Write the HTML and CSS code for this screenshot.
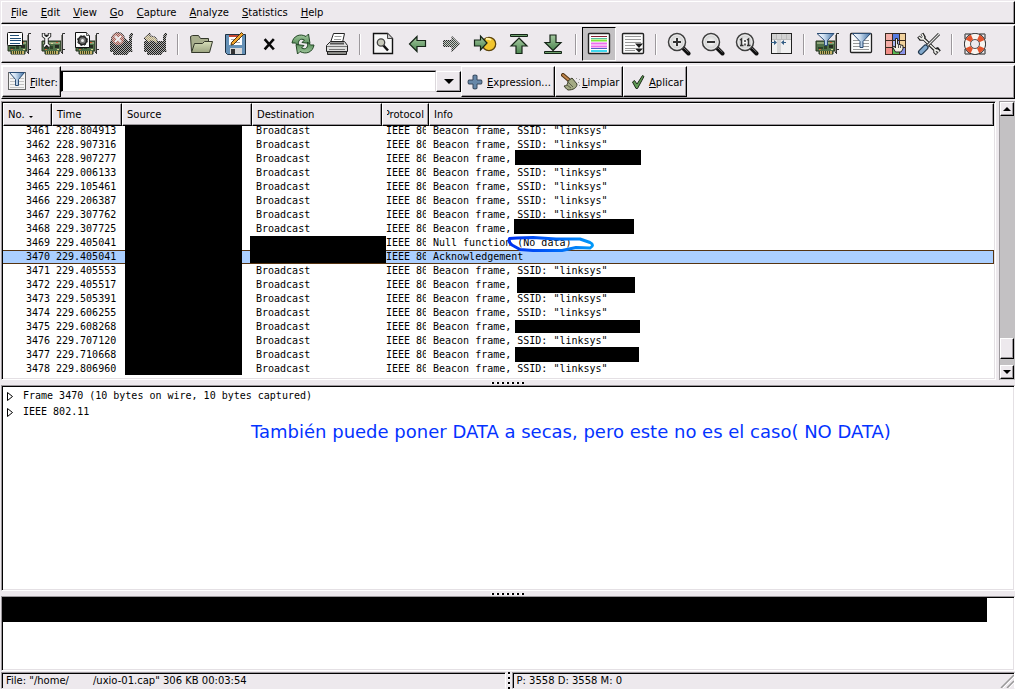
FILE: index.html
```html
<!DOCTYPE html>
<html lang="es">
<head>
<meta charset="utf-8">
<title>uxio-01.cap</title>
<link rel="stylesheet" href="styles.css">
</head>
<body>
<svg class="defs" width="0" height="0" aria-hidden="true">
  <defs>
    <linearGradient id="gFunnel" x1="0" x2="1"><stop offset="0" stop-color="#fff"/><stop offset=".4" stop-color="#cfe0f2"/><stop offset="1" stop-color="#3d6fa4"/></linearGradient>
    <linearGradient id="gGreen" x1="0" y1="0" x2="0" y2="1"><stop offset="0" stop-color="#a5c9a0"/><stop offset="1" stop-color="#4c8650"/></linearGradient>
    <linearGradient id="gFolder" x1="0" y1="0" x2="0" y2="1"><stop offset="0" stop-color="#d6ddb8"/><stop offset="1" stop-color="#9da582"/></linearGradient>
    <radialGradient id="gLens"><stop offset="0" stop-color="#fff"/><stop offset="1" stop-color="#c4c4c4"/></radialGradient>
    <linearGradient id="gInk" x1="0" x2="1"><stop offset="0" stop-color="#0030f0"/><stop offset=".5" stop-color="#0060f8"/><stop offset="1" stop-color="#0098f8"/></linearGradient>
    <pattern id="pDither" width="2" height="2" patternUnits="userSpaceOnUse"><path d="M0 0h1v1H0zM1 1h1v1H1z" fill="#ede9ed"/></pattern>
    <symbol id="card" viewBox="0 0 24 24">
      <path d="M1 9h19v10h-2v3H4v-3H1z" fill="#4f7148" stroke="#26331f"/>
      <path d="M2 10h17v2H2z" fill="#8ea47a"/>
      <path d="M14 13h4v3h-4z" fill="#262c22"/><path d="M3 15h5v2H3zM9 14h3v3H9z" fill="#2d4228"/>
      <path d="M5 19h12v3H5z" fill="#c5b267"/><path d="M6.500 19v3M8.500 19v3M10.500 19v3M12.500 19v3M14.500 19v3" stroke="#37441e"/>
      <path d="M15 10h2v1h-2zM4 17h2v1H4z" fill="#d5603d"/><path d="M10 11h2v1h-2zM16 17h2v1h-2z" fill="#ddd39c"/>
      <path d="M24 1.500h-2.500V22M20 4.500h2M21 17.500h3M20 20.500h2" fill="none" stroke="#303030"/><path d="M20.500 3v17" stroke="#85857c"/>
    </symbol>
    <symbol id="lens" viewBox="0 0 24 24">
      <path d="M15.500 15.500l6 6" stroke="#101010" stroke-width="4" stroke-linecap="round"/><path d="M16.500 15.500l5 4.700" stroke="#777"/>
      <circle cx="10" cy="10" r="8.500" fill="url(#gLens)" stroke="#3e3e3e" stroke-width="1.500"/>
      <circle cx="10" cy="10" r="7" fill="none" stroke="#eee"/>
    </symbol>
  </defs>
</svg>

<nav class="bar menubar" aria-label="Menu">
  <button class="menu"><u>F</u>ile</button>
  <button class="menu"><u>E</u>dit</button>
  <button class="menu"><u>V</u>iew</button>
  <button class="menu"><u>G</u>o</button>
  <button class="menu"><u>C</u>apture</button>
  <button class="menu"><u>A</u>nalyze</button>
  <button class="menu"><u>S</u>tatistics</button>
  <button class="menu"><u>H</u>elp</button>
</nav>

<div class="bar toolbar" role="toolbar" aria-label="Main">
  <button class="tool" aria-label="Interfaces"><svg class="icon" viewBox="0 0 24 24"><use href="#card"/><rect x=".5" y=".5" width="15" height="13" rx="1" fill="#fff" stroke="#111"/><path d="M3 3.500h9M3 6.500h11M3 8.500h11M3 11.500h10" stroke="#235078"/></svg></button>
  <button class="tool" aria-label="Options"><svg class="icon" viewBox="0 0 24 24"><use href="#card"/><path d="M2.500 1v3L5 6v6l-2 3M8.500 1v3L6 6v6l2.500 3M3.500 4.500h4" fill="none" stroke="#222" stroke-width="3.400"/><path d="M2.500 1.500V4L5 6v6l-2 2.500M8.500 1.500V4L6 6v6l2.500 2.500" fill="none" stroke="#f6f6f6" stroke-width="1.600"/></svg></button>
  <button class="tool" aria-label="Start"><svg class="icon" viewBox="0 0 24 24"><use href="#card"/><path d="M.5.5h11l3 3v12H.5z" fill="#fafafa" stroke="#111"/><path d="M11.500.5v3h3" fill="#ddd" stroke="#555"/><circle cx="7.500" cy="8.500" r="4" fill="#777" stroke="#222" stroke-width="1.600"/><circle cx="7.500" cy="8.500" r="5" fill="none" stroke="#222" stroke-dasharray="2 2"/><circle cx="7.500" cy="8.500" r="1.500" fill="#eee"/></svg></button>
  <button class="tool" aria-label="Stop" disabled><svg class="icon" viewBox="0 0 24 24"><path d="M1 10l3-6h10l5 5h1V4l2-3h2v2l-1 2v13l1 2h-4l-2 3H4v-3H1z" fill="#1c1e1a"/><circle cx="9" cy="7" r="6.500" fill="#a5584b" stroke="#333"/><path d="M6 4l6 6M12 4l-6 6" stroke="#eee" stroke-width="2"/><rect width="24" height="24" fill="url(#pDither)" opacity=".7"/></svg></button>
  <button class="tool" aria-label="Restart" disabled><svg class="icon" viewBox="0 0 24 24"><path d="M1 9h19V4l2-3h2v2l-1 2v13l1 2h-4l-2 3H4v-3H1z" fill="#1c1e1a"/><path d="M1 6l6-5v3c6 0 8 3 7 9-1-3-3-4-7-4v3z" fill="#b8aa78" stroke="#222"/><rect width="24" height="24" fill="url(#pDither)" opacity=".7"/></svg></button>
  <span class="sep"></span>
  <button class="tool" aria-label="Open"><svg class="icon" viewBox="0 0 24 24"><path d="M2.500 19.500L1.500 4.500l2-1h6l2 3h8v4" fill="#a9af8e" stroke="#33372a"/><path d="M2.500 20.500l3-9h8l2-2h8l-3 11z" fill="url(#gFolder)" stroke="#33372a"/></svg></button>
  <button class="tool" aria-label="Save"><svg class="icon" viewBox="0 0 24 24"><path d="M2.500 2.500h20v20h-18l-2-2z" fill="#6591b7" stroke="#1e3142"/><path d="M6 3h13v10H6z" fill="#fff"/><path d="M6 3h13v2H6z" fill="#c54832"/><path d="M8 7.500h9M8 10.500h9" stroke="#aaa"/><path d="M7 16h12v6H7z" fill="#d8d8d8"/><path d="M8 17h4v5H8z" fill="#333"/><path d="M18.500.5l2 2-10 10-2.500.500.500-2.500z" fill="#f0a32a" stroke="#4d3411"/></svg></button>
  <button class="tool" aria-label="Close"><svg class="icon" viewBox="0 0 24 24"><path d="M8.500 8l7.500 8.500M16 8L8.500 16.500" stroke="#080808" stroke-width="2.600" stroke-linecap="square"/></svg></button>
  <button class="tool" aria-label="Reload"><svg class="icon" viewBox="0 0 24 24"><path id="half" d="M1 11C2 4 9 1 15 4.500L17.500 2l1.500 9.500-8-1 2.500-2.500C9.500 6 6.500 8 7.500 14L4.500 11z" fill="url(#gGreen)" stroke="#234726"/><use href="#half" transform="rotate(180 12 12)"/></svg></button>
  <button class="tool" aria-label="Print"><svg class="icon" viewBox="0 0 24 24"><path d="M5.500 10.500l3-9h11l-2 9z" fill="#fff" stroke="#222"/><path d="M9.500 4.500h7M9 7.500h7" stroke="#999"/><path d="M1.500 13.500l4-4h14l3 4v6h-21z" fill="#dedede" stroke="#222"/><path d="M5 11.500h14" stroke="#555" stroke-width="2"/><path d="M2 14.500h20M4 17.500h16" stroke="#777"/><path d="M2.500 19.500h19v3h-19z" fill="#8b8b87" stroke="#222"/></svg></button>
  <span class="sep"></span>
  <button class="tool" aria-label="Find"><svg class="icon" viewBox="0 0 24 24"><path d="M2.500 1.500h14l5 5v15h-19z" fill="#f7f7f7" stroke="#111" stroke-width="1.400"/><path d="M16.500 1.500v5h5" fill="#ccc" stroke="#444"/><path d="M12 13l5 5.500" stroke="#111" stroke-width="2.600"/><circle cx="10" cy="10.500" r="3.700" fill="#c8cabb" stroke="#444" stroke-width="1.300"/></svg></button>
  <button class="tool" aria-label="Back"><svg class="icon" viewBox="0 0 24 24"><path d="M4.500 12L12 4.500v4h8.500v6H12v5z" fill="url(#gGreen)" stroke="#152417" stroke-width="1.200"/></svg></button>
  <button class="tool" aria-label="Forward" disabled><svg class="icon" viewBox="0 0 24 24"><path d="M20.500 12L13 4.500v4H4.500v6H13v5z" fill="#3d4a3c" stroke="#222"/><rect width="24" height="24" fill="url(#pDither)" opacity=".8"/></svg></button>
  <button class="tool" aria-label="Go to packet"><svg class="icon" viewBox="0 0 24 24"><circle cx="16" cy="12" r="6.700" fill="#f2c52d" stroke="#5c430b" stroke-width="1.300"/><path d="M13 7a5 5 0 0 1 5 1" stroke="#fff3a8" stroke-width="2" fill="none"/><path d="M14 11L7.500 4v4h-6v6h6v4z" fill="url(#gGreen)" stroke="#152417" stroke-width="1.200"/></svg></button>
  <button class="tool" aria-label="First packet"><svg class="icon" viewBox="0 0 24 24"><path d="M3.500 2.500h17v2h-17z" fill="#6ea06d" stroke="#152417"/><path d="M12 6l8 8h-5v7.500H9V14H4z" fill="url(#gGreen)" stroke="#152417" stroke-width="1.200"/></svg></button>
  <button class="tool" aria-label="Last packet"><svg class="icon" viewBox="0 0 24 24"><path d="M3.500 19.500h17v2h-17z" fill="#6ea06d" stroke="#152417"/><path d="M12 18.500l8-8h-5V3H9v7.500H4z" fill="url(#gGreen)" stroke="#152417" stroke-width="1.200"/></svg></button>
  <span class="sep"></span>
  <button class="tool pressed" aria-label="Colorize" aria-pressed="true"><svg class="icon" viewBox="0 0 24 24"><rect x="1.500" y="1.500" width="21" height="20" rx="1" fill="#fff" stroke="#222" stroke-width="1.400"/><path d="M4 4.500h16" stroke="#852034"/><path d="M4 6.500h16" stroke="#55bb99"/><path d="M4 8.500h16" stroke="#7ee43c" stroke-width="2"/><path d="M4 11.500h16M4 14.500h16" stroke="#ee6cee" stroke-width="2"/><path d="M4 16.500h16" stroke="#555fc5"/><path d="M4 19h16" stroke="#3fd8ee" stroke-width="2"/></svg></button>
  <button class="tool" aria-label="Auto scroll"><svg class="icon" viewBox="0 0 24 24"><rect x="1.500" y="1.500" width="21" height="20" rx="1" fill="#fcfcfc" stroke="#222" stroke-width="1.400"/><path d="M4 4.500h16M4 7.500h16M4 10.500h16M4 13.500h10M4 16.500h10M4 18.500h10" stroke="#999"/><path d="M14 11.500h8l-4 4.500zM14 16.500h8l-4 4z" fill="#1c1c1c"/></svg></button>
  <span class="sep"></span>
  <button class="tool" aria-label="Zoom in"><svg class="icon" viewBox="0 0 24 24"><use href="#lens"/><path d="M6 10h8M10 6v8" stroke="#333" stroke-width="2"/></svg></button>
  <button class="tool" aria-label="Zoom out"><svg class="icon" viewBox="0 0 24 24"><use href="#lens"/><path d="M6 10h8" stroke="#333" stroke-width="2"/></svg></button>
  <button class="tool" aria-label="Normal size"><svg class="icon" viewBox="0 0 24 24"><use href="#lens"/><path d="M5 8l1.500-1v7M5 13.500h3.500M12 8l1.500-1v7M12 13.500h3.500M10 8v2M10 11.500v2" stroke="#333" stroke-width="1.500" fill="none"/></svg></button>
  <button class="tool" aria-label="Resize columns"><svg class="icon" viewBox="0 0 24 24"><rect x="2.500" y="1.500" width="20" height="20" fill="#f1f1f1" stroke="#222"/><path d="M3 2h19v5H3z" fill="#d1d1d1"/><path d="M8 2h4v19H8z" fill="#d6d6d6"/><path d="M7.500 2v5M12.500 2v5M17.500 2v5M3 7.500h19" stroke="#bbb"/><path d="M2 10.500h4M13 10.500h4" stroke="#345f85"/><path d="M5 8l3 2.500L5 13zM15 8l-3 2.500 3 2.500z" fill="#345f85"/></svg></button>
  <span class="sep"></span>
  <button class="tool" aria-label="Capture filters"><svg class="icon" viewBox="0 0 24 24"><use href="#card"/><path d="M2 1.500h17l-6.500 7v5h-3v-5z" fill="url(#gFunnel)" stroke="#2c4d74"/></svg></button>
  <button class="tool" aria-label="Display filters"><svg class="icon" viewBox="0 0 24 24"><rect x="1.500" y="1.500" width="21" height="19" rx="1" fill="#fcfcfc" stroke="#222" stroke-width="1.300"/><path d="M4 8.500h16M4 11.500h16M4 14.500h16M4 17.500h16" stroke="#999"/><path d="M3.500 1.500h18l-7.500 8v6h-3v-6z" fill="url(#gFunnel)" stroke="#2c4d74"/></svg></button>
  <button class="tool" aria-label="Coloring rules"><svg class="icon" viewBox="0 0 24 24"><rect x="2" y="1" width="21" height="22" fill="#3b2b20"/><path d="M3 2h6v6H3zM3 9h6v6H3z" fill="#f3ada6"/><path d="M3 16h6v6H3z" fill="#f08d86"/><path d="M10 2h6v6h-6z" fill="#567be0"/><path d="M17 2h5v6h-5zM17 9h5v6h-5z" fill="#f1d29d"/><path d="M10 9h6v6h-6z" fill="#a9b9f1"/><path d="M10 16h6v6h-6z" fill="#58bb55"/><path d="M17 16h5v6h-5z" fill="#8a94e9"/><path d="M12.500 20l-3-5 1.500-1 1.500 2V6.500h2V12l5.500 1.500V17l-2 3z" fill="#f1eee2" stroke="#252525"/><path d="M15.500 13v3M17.500 13.500V16" stroke="#555"/></svg></button>
  <button class="tool" aria-label="Preferences"><svg class="icon" viewBox="0 0 24 24"><path d="M5 5l14 14M1.500 4.500L3.500 7H6l1-2-2-3.500M22.500 19.500L20.500 17l-2.500 1v2l2 2" fill="none" stroke="#222" stroke-width="3.400"/><path d="M5 5.500l14 13M2 5l2 2h2l.500-2L5 2M22 19.500L20 18l-2 .500V20l1.500 1.500" fill="none" stroke="#f1f1ed" stroke-width="1.600"/><path d="M22 2L10 14" stroke="#222" stroke-width="3"/><path d="M22 2L10 14" stroke="#ddd" stroke-width="1.300"/><path d="M8.500 15.500L4 20" stroke="#22384e" stroke-width="6" stroke-linecap="round"/><path d="M8.500 15.500L4 20" stroke="#82a9cd" stroke-width="3.600" stroke-linecap="round"/></svg></button>
  <span class="sep"></span>
  <button class="tool" aria-label="Help"><svg class="icon" viewBox="0 0 24 24"><path d="M2 2h5l4 3M22 2h-5l-4 3M2 22h5l4-3M22 22h-5l-4-3M2 2v5M22 2v5M2 22v-5M22 22v-5" fill="none" stroke="#666" stroke-width="1.500"/><circle cx="12" cy="12" r="7.500" fill="none" stroke="#222" stroke-width="7"/><circle cx="12" cy="12" r="7.500" fill="none" stroke="#f8f4ef" stroke-width="5.400"/><circle cx="12" cy="12" r="7.500" fill="none" stroke="#e3532b" stroke-width="5.400" stroke-dasharray="5.300 6.480" stroke-dashoffset="-3.200"/></svg></button>
</div>

<form class="bar filterbar">
  <button type="button" class="raised filter-btn"><svg class="small-icon" viewBox="0 0 20 20"><rect x="1.500" y="1.500" width="17" height="17" fill="#f4f4f4" stroke="#666"/><path d="M3 7.500h14M3 10.500h14M3 13.500h14M3 16.500h14" stroke="#c2c2c2"/><path d="M2.500 1.500h15l-6 7v6h-3v-6z" fill="url(#gFunnel)" stroke="#2c4d74"/></svg><span><u>F</u>ilter:</span></button>
  <div class="combo">
    <input class="entry" type="text" aria-label="Filter">
    <button type="button" class="drop" aria-label="History"><svg class="arrow-wide" viewBox="0 0 10 5"><path d="M0 0h10L5 5z"/></svg></button>
  </div>
  <button type="button" class="raised expr-btn"><svg class="btn-icon" viewBox="0 0 16 16"><path d="M6 1.500q2-1 4 0V6h4.500q1 2 0 4H10v4.500q-2 1-4 0V10H1.500q-1-2 0-4H6z" fill="#6687a8" stroke="#34475c"/></svg><span><u>E</u>xpression...</span></button>
  <button type="button" class="raised clear-btn"><svg class="clear-icon" viewBox="0 0 20 18"><path d="M2 2l7 6" stroke="#503414" stroke-width="4" stroke-linecap="round"/><path d="M2 2l7 6" stroke="#c0854c" stroke-width="2" stroke-linecap="round"/><path d="M7 8l4-3 5 6c0 4-4 6-9 6-2-1-3-3-4-4 3 0 4-2 4-5z" fill="#a4aa84" stroke="#3a3e2a"/><path d="M7 9l5 5M6 12l4 3" stroke="#5b6048"/><path d="M15 5h1v1h-1zM18 6h1v1h-1zM17 9h1v1h-1zM18 12h1v1h-1z" fill="#999"/></svg><span><u>L</u>impiar</span></button>
  <button type="button" class="raised apply-btn"><svg class="btn-icon" viewBox="0 0 16 16"><path d="M2.500 8l2-1.500L7 10l5.500-8.500 1.500 1L7.500 14.500H6z" fill="#5f9a55" stroke="#1c2b19"/></svg><span><u>A</u>plicar</span></button>
</form>

<main class="panes">
  <section class="list-row">
    <div class="sunken list">
      <table class="packets">
        <colgroup><col class="c-no"><col class="c-time"><col class="c-addr"><col class="c-addr"><col class="c-proto"><col></colgroup>
        <thead>
          <tr><th>No. <svg class="sort" viewBox="0 0 4 2"><path d="M0 0h4L2 2z"/></svg></th><th>Time</th><th>Source</th><th>Destination</th><th><div class="cut">Protocol</div></th><th>Info</th></tr>
        </thead>
        <tbody>
          <tr class="partial"><td>3461</td><td>228.804913</td><td></td><td>Broadcast</td><td><div class="clip">IEEE 802.11</div></td><td>Beacon frame, SSID: "linksys"</td></tr>
          <tr><td>3462</td><td>228.907316</td><td></td><td>Broadcast</td><td><div class="clip">IEEE 802.11</div></td><td>Beacon frame, SSID: "linksys"</td></tr>
          <tr><td>3463</td><td>228.907277</td><td></td><td>Broadcast</td><td><div class="clip">IEEE 802.11</div></td><td>Beacon frame,</td></tr>
          <tr><td>3464</td><td>229.006133</td><td></td><td>Broadcast</td><td><div class="clip">IEEE 802.11</div></td><td>Beacon frame, SSID: "linksys"</td></tr>
          <tr><td>3465</td><td>229.105461</td><td></td><td>Broadcast</td><td><div class="clip">IEEE 802.11</div></td><td>Beacon frame, SSID: "linksys"</td></tr>
          <tr><td>3466</td><td>229.206387</td><td></td><td>Broadcast</td><td><div class="clip">IEEE 802.11</div></td><td>Beacon frame, SSID: "linksys"</td></tr>
          <tr><td>3467</td><td>229.307762</td><td></td><td>Broadcast</td><td><div class="clip">IEEE 802.11</div></td><td>Beacon frame, SSID: "linksys"</td></tr>
          <tr><td>3468</td><td>229.307725</td><td></td><td>Broadcast</td><td><div class="clip">IEEE 802.11</div></td><td>Beacon frame,</td></tr>
          <tr><td>3469</td><td>229.405041</td><td></td><td></td><td><div class="clip">IEEE 802.11</div></td><td>Null function (No data)</td></tr>
          <tr class="selected"><td>3470</td><td>229.405041</td><td></td><td></td><td><div class="clip">IEEE 802.11</div></td><td>Acknowledgement</td></tr>
          <tr><td>3471</td><td>229.405553</td><td></td><td>Broadcast</td><td><div class="clip">IEEE 802.11</div></td><td>Beacon frame, SSID: "linksys"</td></tr>
          <tr><td>3472</td><td>229.405517</td><td></td><td>Broadcast</td><td><div class="clip">IEEE 802.11</div></td><td>Beacon frame,</td></tr>
          <tr><td>3473</td><td>229.505391</td><td></td><td>Broadcast</td><td><div class="clip">IEEE 802.11</div></td><td>Beacon frame, SSID: "linksys"</td></tr>
          <tr><td>3474</td><td>229.606255</td><td></td><td>Broadcast</td><td><div class="clip">IEEE 802.11</div></td><td>Beacon frame, SSID: "linksys"</td></tr>
          <tr><td>3475</td><td>229.608268</td><td></td><td>Broadcast</td><td><div class="clip">IEEE 802.11</div></td><td>Beacon frame,</td></tr>
          <tr><td>3476</td><td>229.707120</td><td></td><td>Broadcast</td><td><div class="clip">IEEE 802.11</div></td><td>Beacon frame, SSID: "linksys"</td></tr>
          <tr><td>3477</td><td>229.710668</td><td></td><td>Broadcast</td><td><div class="clip">IEEE 802.11</div></td><td>Beacon frame,</td></tr>
          <tr><td>3478</td><td>229.806960</td><td></td><td>Broadcast</td><td><div class="clip">IEEE 802.11</div></td><td>Beacon frame, SSID: "linksys"</td></tr>
        </tbody>
      </table>
      <svg class="marks" width="700" height="275" viewBox="3 103 700 275" aria-hidden="true">
        <path d="M125 126h117v249H125zM250 236h136v27H250zM515 150h126v15H515zM514 219h120v15H514zM517 277h118v16H517zM515 320h125v13H515zM515 347h124v15H515z"/>
        <path d="M517 238L509.500 238.500Q508 242 512 245L520 249.500L533 250.500H562L576 247.500L590 248Q595 245 590 242.500L580 239L556 239L533 237.500L517 238" fill="none" stroke="url(#gInk)" stroke-width="3" stroke-linejoin="round" stroke-linecap="round"/>
      </svg>
    </div>
    <div class="scroll">
      <button class="step" aria-label="Up"><svg class="arrow" viewBox="0 0 8 4"><path d="M0 4h8L4 0z"/></svg></button>
      <div class="trough"><div class="thumb"></div></div>
      <button class="step" aria-label="Down"><svg class="arrow" viewBox="0 0 8 4"><path d="M0 0h8L4 4z"/></svg></button>
    </div>
  </section>
  <div class="splitter"><span class="grip"></span></div>
  <section class="sunken tree">
    <div class="node"><svg class="twist" viewBox="0 0 6 9"><path d="M.5.5v8l5-4z"/></svg>Frame 3470 (10 bytes on wire, 10 bytes captured)</div>
    <div class="node"><svg class="twist" viewBox="0 0 6 9"><path d="M.5.5v8l5-4z"/></svg>IEEE 802.11</div>
    <p class="note">También puede poner DATA a secas, pero este no es el caso( NO DATA)</p>
  </section>
  <div class="splitter"><span class="grip"></span></div>
  <section class="sunken hex"><div class="block"></div></section>
</main>

<footer class="status">
  <div class="cell file"><span>File: "/home/</span><span>/uxio-01.cap" 306 KB 00:03:54</span></div>
  <span class="vgrip"></span>
  <div class="cell counts">P: 3558 D: 3558 M: 0<svg class="resize" viewBox="0 0 14 14"><path d="M1 14L14 1M7 14l7-7" stroke="#999" stroke-width="1.500"/><path d="M3 14L14 3M9 14l5-5" stroke="#fff"/></svg></div>
</footer>
</body>
</html>
```

FILE: styles.css
```css
* { box-sizing: border-box; }

:root {
  --face: #ede9ed;
  --shade: #9c989c;
  --trough: #c3c1c3;
}

body {
  margin: 0;
  padding: 1px 0 0 1px;
  height: 100vh;
  display: flex;
  flex-direction: column;
  overflow: hidden;
  background: var(--face);
  color: #000;
  font: 10px/14px "DejaVu Sans", sans-serif;
}

button {
  margin: 0;
  padding: 0;
  border: 0;
  background: none;
  color: inherit;
  font: inherit;
}

u { text-underline-offset: 1px; }
.defs { position: absolute; }

.bar {
  display: flex;
  flex: none;
  border: 1px solid;
  border-color: #fff #000 #000 #fff;
  box-shadow: inset -1px -1px var(--shade);
}

.menubar { height: 23px; padding-left: 3px; margin-bottom: 1px; }
.menu { padding: 0 7px 0 6px; }

.toolbar { height: 38px; margin-bottom: 2px; align-items: center; }
.tool {
  width: 34px;
  height: 34px;
  display: flex;
  flex: none;
  align-items: center;
  justify-content: center;
}
.icon { width: 24px; height: 24px; }
.pressed {
  background: var(--trough);
  border: 1px solid;
  border-color: #000 #fff #fff #000;
}
.sep {
  flex: none;
  width: 2px;
  height: 21px;
  margin: 0 5px;
  background: linear-gradient(90deg, var(--shade) 50%, #fff 50%);
}

.filterbar { height: 34px; margin-bottom: 2px; padding: 0 0 1px; align-items: stretch; }
.raised {
  display: flex;
  flex: none;
  align-items: center;
  border: 1px solid;
  border-color: #fff #000 #000 #fff;
  box-shadow: inset -1px -1px var(--shade);
  white-space: nowrap;
}
.raised span { padding-top: 3px; }
.filter-btn { width: 59px; padding-left: 4px; gap: 3px; }
.small-icon { width: 20px; height: 20px; margin-bottom: 2px; }
.expr-btn { width: 94px; padding-left: 5px; gap: 4px; }
.clear-btn { width: 68px; padding-left: 5px; gap: 1px; }
.apply-btn { width: 64px; padding-left: 6px; gap: 3px; }
.btn-icon { width: 16px; height: 16px; flex: none; }
.clear-icon { width: 20px; height: 18px; flex: none; }
.combo { display: flex; flex: 0 1 400px; margin: 5px 0; }
.entry {
  flex: 1;
  min-width: 0;
  border: 1px solid;
  border-color: #000 #dcd8dc #dcd8dc #000;
  background: #fff;
  box-shadow: 0 -1px var(--shade), inset 1px 0 #000;
  padding: 0 4px;
  font: inherit;
  outline: 0;
}
.drop {
  width: 25px;
  display: flex;
  align-items: center;
  justify-content: center;
  border: 1px solid;
  border-color: #fff #000 #000 #fff;
  box-shadow: inset -1px -1px var(--shade);
}
.arrow-wide { width: 10px; height: 5px; }

.panes { flex: 1; display: flex; flex-direction: column; min-height: 0; }
.list-row { flex: 279 1 279px; display: flex; gap: 3px; min-height: 0; }
.sunken {
  position: relative;
  overflow: hidden;
  border: 1px solid;
  border-color: var(--shade) #fff #fff var(--shade);
  background: #fff;
  box-shadow: inset 1px 1px #000, inset -1px -1px #e4e0e4;
}
.list { flex: 1; min-width: 0; padding: 1px 1px 0 1px; }

.packets {
  width: 100%;
  table-layout: fixed;
  border-collapse: separate;
  border-spacing: 0;
}
.c-no { width: 49px; }
.c-time { width: 70px; }
.c-addr { width: 130px; }
.c-proto { width: 47px; }
.packets th {
  height: 23px;
  padding: 0 4px;
  background: var(--face);
  border: 1px solid;
  border-color: #fff #000 #000 #fff;
  box-shadow: inset -1px -1px var(--shade);
  font-weight: normal;
  text-align: left;
  white-space: nowrap;
}
.cut { display: flex; justify-content: flex-end; overflow: hidden; width: 37px; }
.clip { overflow: hidden; width: 40px; }
.sort { width: 4px; height: 2px; margin-left: 1px; }
.packets td {
  height: 14px;
  padding: 0 2px 0 4px;
  overflow: hidden;
  font: 10px/12px "DejaVu Sans Mono", monospace;
  white-space: nowrap;
}
.packets td:first-child { text-align: right; }
.partial td { height: 12px; padding-bottom: 2px; line-height: 10px; }
.selected td { background: #abcfff; border: 1px solid #553311; border-width: 1px 0; }
.selected td:last-child { border-right-width: 1px; }
.marks { position: absolute; left: 1px; top: 1px; }

.scroll {
  width: 16px;
  display: flex;
  flex-direction: column;
  border-left: 1px solid var(--shade);
  border-top: 1px solid var(--shade);
  padding: 0 1px 1px 0;
  background: var(--trough);
}
.step, .thumb {
  flex: none;
  display: flex;
  align-items: center;
  justify-content: center;
  background: var(--face);
  border: 1px solid;
  border-color: #fff #000 #000 #fff;
  box-shadow: inset -1px -1px var(--shade);
}
.step { height: 14px; }
.arrow { width: 8px; height: 4px; }
.trough { flex: 1; display: flex; align-items: flex-end; padding-bottom: 6px; }
.thumb { width: 100%; height: 21px; }

.splitter { flex: none; height: 5px; display: flex; justify-content: center; align-items: center; }
.grip {
  width: 35px;
  height: 2px;
  background: repeating-linear-gradient(90deg, #fff 0 1px, #000 1px 3px, transparent 3px 5px);
}

.tree { flex: 206 1 206px; padding: 2px 0 0 5px; }
.node {
  display: flex;
  align-items: center;
  gap: 10px;
  height: 16px;
  font: 10px/16px "DejaVu Sans Mono", monospace;
}
.twist { width: 6px; height: 9px; fill: #fff; stroke: #000; }
.note {
  position: absolute;
  left: 249px;
  top: 34px;
  margin: 0;
  color: #0433ff;
  font-size: 18px;
  line-height: 24px;
  white-space: nowrap;
}
.hex { flex: 75 1 75px; padding: 1px 27px 0 0; }
.block { height: 24px; background: #000; }

.status { display: flex; flex: none; height: 17px; margin-top: 1px; }
.cell {
  position: relative;
  border: 1px solid;
  border-color: var(--shade) #fff var(--face) var(--shade);
  box-shadow: inset 1px 1px #000;
  padding-left: 4px;
  line-height: 16px;
  white-space: nowrap;
  overflow: hidden;
}
.file { flex: 505 1 0; display: flex; gap: 24px; }
.counts { flex: 504 1 0; }
.vgrip {
  width: 5px;
  margin: 0 1px 0 0;
  background: repeating-linear-gradient(#000 0 2px, #fff 2px 3px, transparent 3px 5px) 2px 0 / 2px 100% no-repeat;
}
.resize { position: absolute; right: 0; bottom: 0; width: 14px; height: 14px; }
```
